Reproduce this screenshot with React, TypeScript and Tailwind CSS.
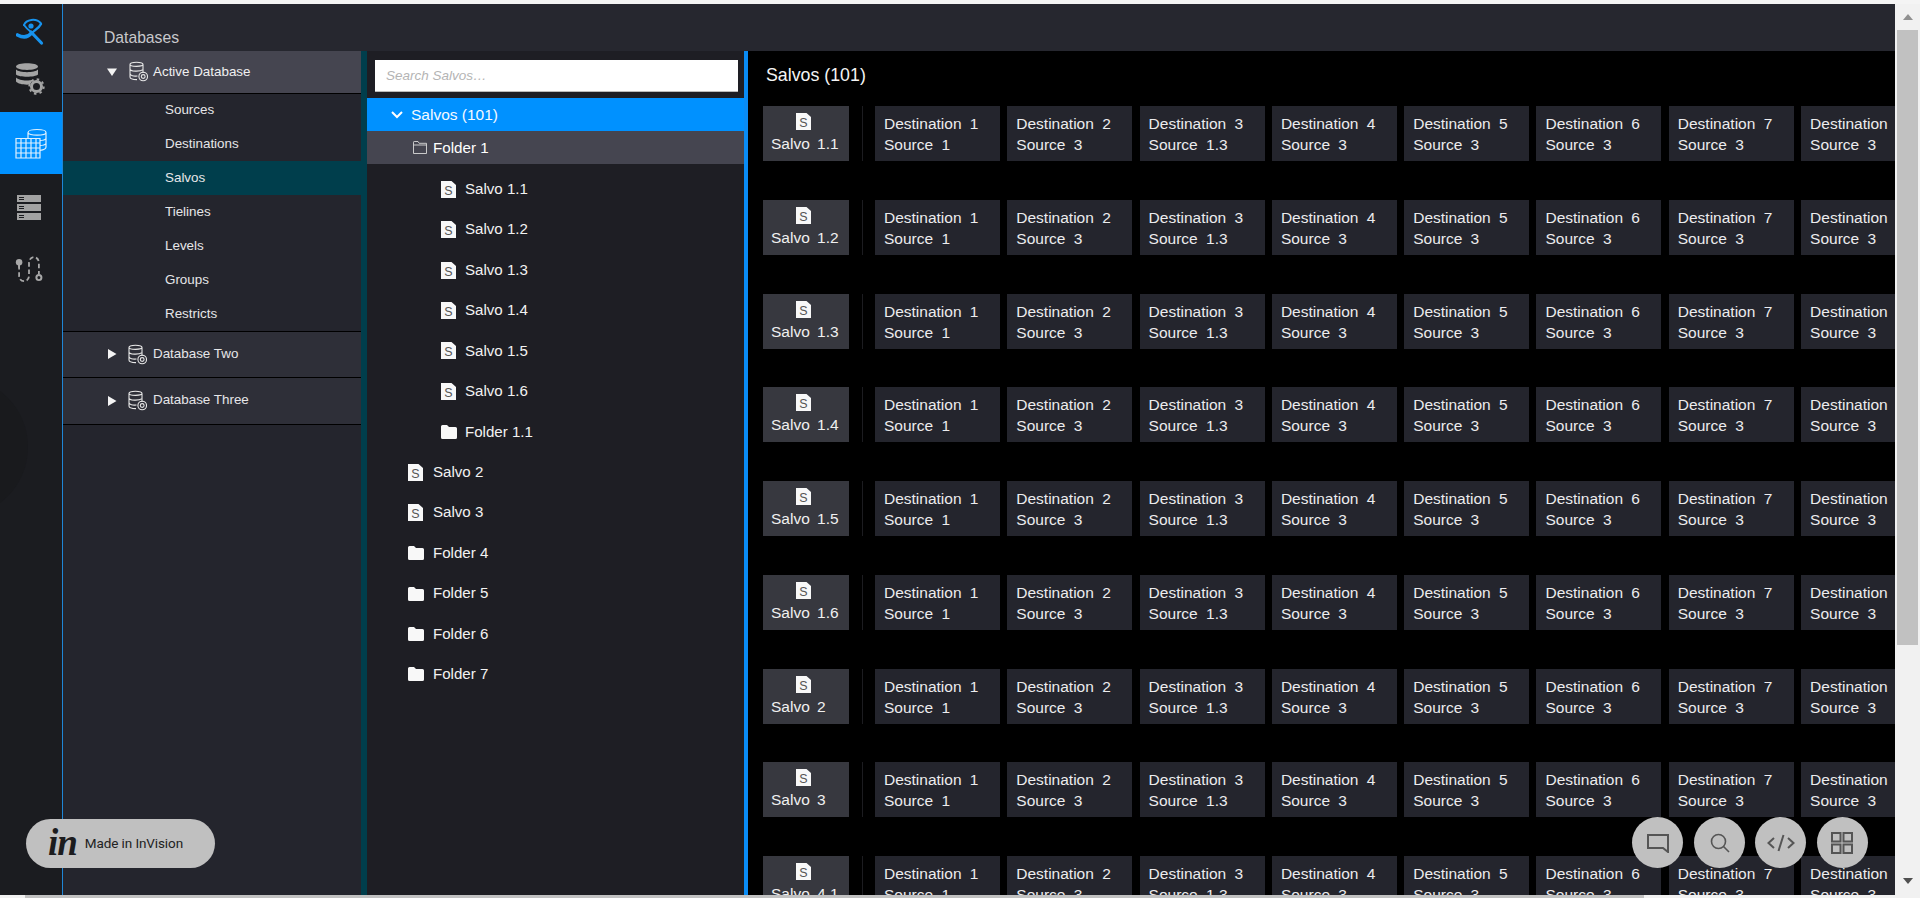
import React from "react";

const DocS = ({ className = "" }: { className?: string }) => (
  <svg viewBox="0 0 15 17" className={"w-[15px] h-[17px] shrink-0 " + className}>
    <path d="M0 0H10.5L15 4V17H0Z" fill="#f8f8f8" />
    <text x="7.5" y="14" textAnchor="middle" fontSize="12.5" fill="#555" fontFamily="'Liberation Sans', sans-serif">S</text>
  </svg>
);

const FolderSolid = () => (
  <svg viewBox="0 0 16 14" className="w-[16px] h-[14px] shrink-0">
    <path d="M0 1.5Q0 0 1.5 0H6L8 2H14.5Q16 2 16 3.5V12.5Q16 14 14.5 14H1.5Q0 14 0 12.5Z" fill="#f8f8f8" />
  </svg>
);

const FolderOpen = () => (
  <svg viewBox="0 0 14 13" className="w-[14px] h-[13px] shrink-0" fill="none" stroke="#d8d8d8" strokeWidth="0.9">
    <path d="M.5 12.5V1.2Q.5.5 1.2.5H5L6.2 2.3H13.5V12.5ZM.5 4H13.5" />
  </svg>
);

const DbSmall = () => (
  <svg viewBox="0 0 19 21" className="w-[19px] h-[21px] shrink-0" fill="none" stroke="#e8e8e8" strokeWidth="1.1">
    <path d="M1 3.5C1 .5 14 .5 14 3.5V12M1 3.5V16C1 18 5 18.6 8 18.6M1 3.5C1 6 14 6 14 3.5M1 8C1 10.6 11 10.8 14 8.6M1 12.5C1 15 5 15.3 8.5 15" />
    <circle cx="14.2" cy="15.5" r="4.3" />
    <circle cx="14.2" cy="15.5" r="1.9" />
  </svg>
);

const Tri = ({ open }: { open: boolean }) => (
  <svg viewBox="0 0 10 10" className="w-[10px] h-[10px] shrink-0" fill="#f4f4f4">
    {open ? <path d="M0 1.5H10L5 9Z" /> : <path d="M1 0L9.5 5L1 10Z" />}
  </svg>
);

const Logo = () => (
  <svg viewBox="0 0 30 30" className="w-[30px] h-[30px]" fill="none" stroke="#1793ee" strokeLinecap="round">
    <circle cx="15" cy="10" r="2.6" fill="#1793ee" stroke="none" />
    <path d="M8 9C10 3.5 20 1.5 25 7.5" strokeWidth="2" />
    <path d="M25 8C23 12 19 14 16.5 16.5" strokeWidth="2.4" />
    <path d="M8 9C10 12 12.5 14 15 16" strokeWidth="1.8" />
    <path d="M15 16L25.5 27" strokeWidth="3.2" />
    <path d="M15.5 17C12 21.5 7 22 1.5 19" strokeWidth="3.6" />
  </svg>
);

const DbGear = () => (
  <svg viewBox="0 0 30 32" className="w-[30px] h-[33px]">
    <g fill="#a4a4a4">
      <path d="M1 4C1-.5 23-.5 23 4S1 8.5 1 4Z" />
      <path d="M1 7C4 10.5 20 10.5 23 7V12C20 15 4 15 1 12Z" />
      <path d="M1 15C4 18.5 14 18.5 18 17L15 22C9 22.5 3 21.5 1 19Z" />
    </g>
    <circle cx="21.5" cy="24" r="5" fill="none" stroke="#a4a4a4" strokeWidth="3" />
    <circle cx="21.5" cy="24" r="7.2" fill="none" stroke="#a4a4a4" strokeWidth="2" strokeDasharray="2.5 3.15" />
  </svg>
);

const DbGrid = () => (
  <svg viewBox="0 0 32 31" className="w-[32px] h-[31px]" fill="none" stroke="#dff1ff" strokeWidth="1.2">
    <path d="M13 10V4.5C13 .5 31 .5 31 4.5V19C31 21 28 22 25 22.3M13 4.5C13 8 31 8 31 4.5M25 12.5C28 12.5 30 12 31 10.5M25 17.5C28 17.5 30 17 31 15.5" />
    <path d="M1 10.5H25V30H1ZM1 15H25M1 20H25M1 25H25M6 10.5V30M11 10.5V30M16 10.5V30M21 10.5V30" />
  </svg>
);

const Stack = () => (
  <div className="flex flex-col gap-[2px] w-[24px]">
    {[0, 1, 2].map((i) => (
      <div key={i} className="h-[7px] bg-[#a2a2a2] flex items-center pl-[2px]">
        <div className="w-[5px] h-[3px] border-y border-[#1b1c20]" />
      </div>
    ))}
  </div>
);

const Route = () => (
  <svg viewBox="0 0 30 30" className="w-[30px] h-[27px]" fill="none" stroke="#a8a8a8">
    <circle cx="4" cy="7" r="3.6" fill="#a8a8a8" stroke="none" />
    <path d="M4 10V22C4 30 15 30 15 22V8C15 -1 26 -1 26 8V20" strokeWidth="2" strokeDasharray="5 3" />
    <path d="M4 9V13" strokeWidth="2" />
    <circle cx="26" cy="24" r="2.8" strokeWidth="2.2" />
  </svg>
);

const subs = ["Sources", "Destinations", "Salvos", "Tielines", "Levels", "Groups", "Restricts"];

const tree: { label: string; kind: "doc" | "folder"; nested: boolean }[] = [
  { label: "Salvo 1.1", kind: "doc", nested: true },
  { label: "Salvo 1.2", kind: "doc", nested: true },
  { label: "Salvo 1.3", kind: "doc", nested: true },
  { label: "Salvo 1.4", kind: "doc", nested: true },
  { label: "Salvo 1.5", kind: "doc", nested: true },
  { label: "Salvo 1.6", kind: "doc", nested: true },
  { label: "Folder 1.1", kind: "folder", nested: true },
  { label: "Salvo 2", kind: "doc", nested: false },
  { label: "Salvo 3", kind: "doc", nested: false },
  { label: "Folder 4", kind: "folder", nested: false },
  { label: "Folder 5", kind: "folder", nested: false },
  { label: "Folder 6", kind: "folder", nested: false },
  { label: "Folder 7", kind: "folder", nested: false },
];

const salvoRows = ["Salvo 1.1", "Salvo 1.2", "Salvo 1.3", "Salvo 1.4", "Salvo 1.5", "Salvo 1.6", "Salvo 2", "Salvo 3", "Salvo 4.1"];
const dests = [
  ["Destination 1", "Source 1"],
  ["Destination 2", "Source 3"],
  ["Destination 3", "Source 1.3"],
  ["Destination 4", "Source 3"],
  ["Destination 5", "Source 3"],
  ["Destination 6", "Source 3"],
  ["Destination 7", "Source 3"],
  ["Destination", "Source 3"],
];

const Fab = ({ children }: { children: React.ReactNode }) => (
  <div className="w-[51px] h-[51px] rounded-full bg-[#c0c0c0] flex items-center justify-center shrink-0">{children}</div>
);

export default function App() {
  return (
    <div className="relative w-[1920px] h-[898px] overflow-hidden bg-[#f1f1f1] flex flex-col font-['Liberation_Sans',Arial,sans-serif] text-white">
      <div className="h-[4px] bg-[#f4f4f4] shrink-0" />
      <div className="flex flex-1 min-h-0">
        <div className="flex w-[1895px] shrink-0 min-h-0">
          {/* icon rail */}
          <div className="relative w-[63px] shrink-0 bg-[#1b1c20] border-r border-[#1f86d6] flex flex-col overflow-hidden">
            <div className="h-[44px] flex items-center justify-center pt-[10px]"><Logo /></div>
            <div className="h-[64px] flex items-center justify-center pb-[4px] pr-[2px]"><DbGear /></div>
            <div className="relative z-10 h-[62px] bg-[#0091ff] flex items-center justify-center pr-[1px] -mr-[1px]"><DbGrid /></div>
            <div className="h-[66px] flex items-center justify-center pr-[5px]"><Stack /></div>
            <div className="h-[58px] flex items-center justify-center pr-[4px]"><Route /></div>
            <div className="absolute -left-[112px] top-[373px] w-[140px] h-[140px] rounded-full bg-[#191a1d]" />
          </div>
          <div className="flex-1 min-w-0 flex flex-col">
            {/* top bar */}
            <div className="h-[47px] shrink-0 bg-[#26272f] pl-[41px] pt-[25px] text-[15.7px] leading-[18px] font-light text-[#c8c8cc]">Databases</div>
            <div className="flex-1 min-h-0 flex">
              {/* databases panel */}
              <div className="w-[298px] shrink-0 bg-[#24252d] text-[13.4px]">
                <div className="h-[42.5px] bg-[#454550] border-b border-black flex items-center pl-[44px]">
                  <Tri open />
                  <span className="ml-[12px]"><DbSmall /></span>
                  <span className="ml-[5px] text-[#f0f0f0]">Active Database</span>
                </div>
                <div>
                  {subs.map((s) => (
                    <div key={s} className={"h-[33.9px] flex items-center pl-[102px] text-[#e6e6e8] " + (s === "Salvos" ? "bg-[#003e4c]" : "")}>
                      {s}
                    </div>
                  ))}
                </div>
                {["Database Two", "Database Three"].map((d, i) => (
                  <div key={d} className={"h-[47px] bg-[#2e2f38] border-b border-black flex items-center pl-[44px] " + (i === 0 ? "border-t" : "")}>
                    <Tri open={false} />
                    <span className="ml-[11px]"><DbSmall /></span>
                    <span className="ml-[6px] -mt-[1px] text-[#e6e6e8]">{d}</span>
                  </div>
                ))}
              </div>
              <div className="w-[6px] shrink-0 bg-[#003e4c]" />
              {/* tree panel */}
              <div className="w-[377px] shrink-0 bg-[#1e1e24] flex flex-col">
                <div className="h-[47px] shrink-0 pl-[8px] pr-[6px] pt-[9px]">
                  <div className="h-[32px] bg-white border-b border-[#bbb] flex items-center pl-[11px] pt-[1px] text-[13.5px] italic font-light text-[#b4b4b4]">Search Salvos…</div>
                </div>
                <div className="h-[33px] shrink-0 bg-[#0091ff] flex items-center pl-[24px] text-[15.5px] text-[#f4f9ff]">
                  <svg viewBox="0 0 12 8" className="w-[12px] h-[8px]" fill="none" stroke="#fff" strokeWidth="2"><path d="M1 1L6 6L11 1" /></svg>
                  <span className="ml-[8px]">Salvos (101)</span>
                </div>
                <div className="h-[33px] shrink-0 bg-[#454550] flex items-center pl-[46px] text-[15.2px]">
                  <FolderOpen />
                  <span className="ml-[6px] mt-[1px]">Folder 1</span>
                </div>
                <div className="pt-[5px]">
                  {tree.map((t) => (
                    <div key={t.label} className={"h-[40.45px] flex items-center text-[15.1px] text-[#f2f2f2] " + (t.nested ? "pl-[74px]" : "pl-[41px]")}>
                      <span className={"flex " + (t.nested ? "w-[24px]" : "w-[25px]")}>{t.kind === "doc" ? <DocS /> : <FolderSolid />}</span>
                      <span>{t.label}</span>
                    </div>
                  ))}
                </div>
              </div>
              <div className="w-[4px] shrink-0 bg-[#0a8cf5]" />
              {/* salvos content */}
              <div className="flex-1 min-w-0 bg-black overflow-hidden pl-[15px]">
                <div className="h-[55px] pl-[3px] pt-[14px] text-[17.8px] leading-[21px] text-[#f4f4f4]">Salvos (101)</div>
                <div className="flex flex-col gap-[38.75px] w-[1200px]">
                  {salvoRows.map((name) => (
                    <div key={name} className="flex h-[55px] shrink-0 text-[15.5px] leading-[21px] [word-spacing:4px]">
                      <div className="w-[86px] shrink-0 bg-[#37383f] flex flex-col items-start pt-[7px]">
                        <DocS className="ml-[33px]" />
                        <div className="pl-[8px] mt-[3px] text-[#f0f0f0] [word-spacing:3px]">{name}</div>
                      </div>
                      <div className="w-[1px] shrink-0 bg-[#1c1c20] ml-[13px] mr-[12px]" />
                      <div className="flex gap-[7.3px]">
                        {dests.map(([a, b], i) => (
                          <div key={i} className="w-[125px] shrink-0 bg-[#24252d] pl-[9px] pt-[7px] text-[#ececee]">
                            <div>{a}</div>
                            <div>{b}</div>
                          </div>
                        ))}
                      </div>
                    </div>
                  ))}
                </div>
              </div>
            </div>
          </div>
        </div>
        {/* vertical scrollbar */}
        <div className="w-[25px] shrink-0 bg-[#f1f1f1] flex flex-col items-center">
          <div className="h-[26px] shrink-0 flex items-center justify-center">
            <svg viewBox="0 0 10 6" className="w-[10px] h-[6px]" fill="#909090"><path d="M5 0L10 6H0Z" /></svg>
          </div>
          <div className="h-[615px] w-[21px] shrink-0 bg-[#c1c1c1]" />
          <div className="flex-1" />
          <div className="h-[17px] shrink-0 flex items-start justify-center">
            <svg viewBox="0 0 10 6" className="w-[10px] h-[6px]" fill="#505050"><path d="M0 0H10L5 6Z" /></svg>
          </div>
        </div>
      </div>
      {/* horizontal scrollbar */}
      <div className="h-[3px] shrink-0 flex bg-[#f1f1f1]">
        <div className="w-[25px]" />
        <div className="w-[1619px] bg-[#c1c1c1]" />
      </div>

      {/* InVision overlays */}
      <div className="absolute left-[26px] top-[819px] w-[189px] h-[49px] rounded-full bg-[#c0c0c0] flex items-center pl-[22px] text-[#222]">
        <span className="font-['Liberation_Serif',serif] italic font-bold text-[37px] leading-none text-[#1c1c1e] tracking-[-1px] -mt-[3px]">in</span>
        <span className="ml-[8px] text-[13.5px] tracking-[-0.1px] font-['Roboto',sans-serif]">Made in InVision</span>
      </div>
      <div className="absolute left-[1632px] top-[817px] flex gap-[10.6px]">
        <Fab>
          <svg viewBox="0 0 22 20" className="w-[22px] h-[20px]" fill="none" stroke="#555" strokeWidth="2"><path d="M1 2H21V19L16 15H1Z" /></svg>
        </Fab>
        <Fab>
          <svg viewBox="0 0 20 20" className="w-[20px] h-[20px] ml-[2px]" fill="none" stroke="#555" strokeWidth="1.6"><circle cx="8.5" cy="8.5" r="7" /><path d="M13.5 13.5L19 19" /></svg>
        </Fab>
        <Fab>
          <svg viewBox="0 0 28 18" className="w-[28px] h-[18px]" fill="none" stroke="#555" strokeWidth="2"><path d="M7 4L1.5 9L7 14M21 4L26.5 9L21 14M16.5 1L11.5 17" /></svg>
        </Fab>
        <Fab>
          <svg viewBox="0 0 22 22" className="w-[22px] h-[22px]" fill="none" stroke="#555" strokeWidth="2"><rect x="1" y="1" width="8.5" height="8.5" /><rect x="12.5" y="1" width="8.5" height="8.5" /><rect x="1" y="12.5" width="8.5" height="8.5" /><rect x="12.5" y="12.5" width="8.5" height="8.5" /></svg>
        </Fab>
      </div>
    </div>
  );
}
